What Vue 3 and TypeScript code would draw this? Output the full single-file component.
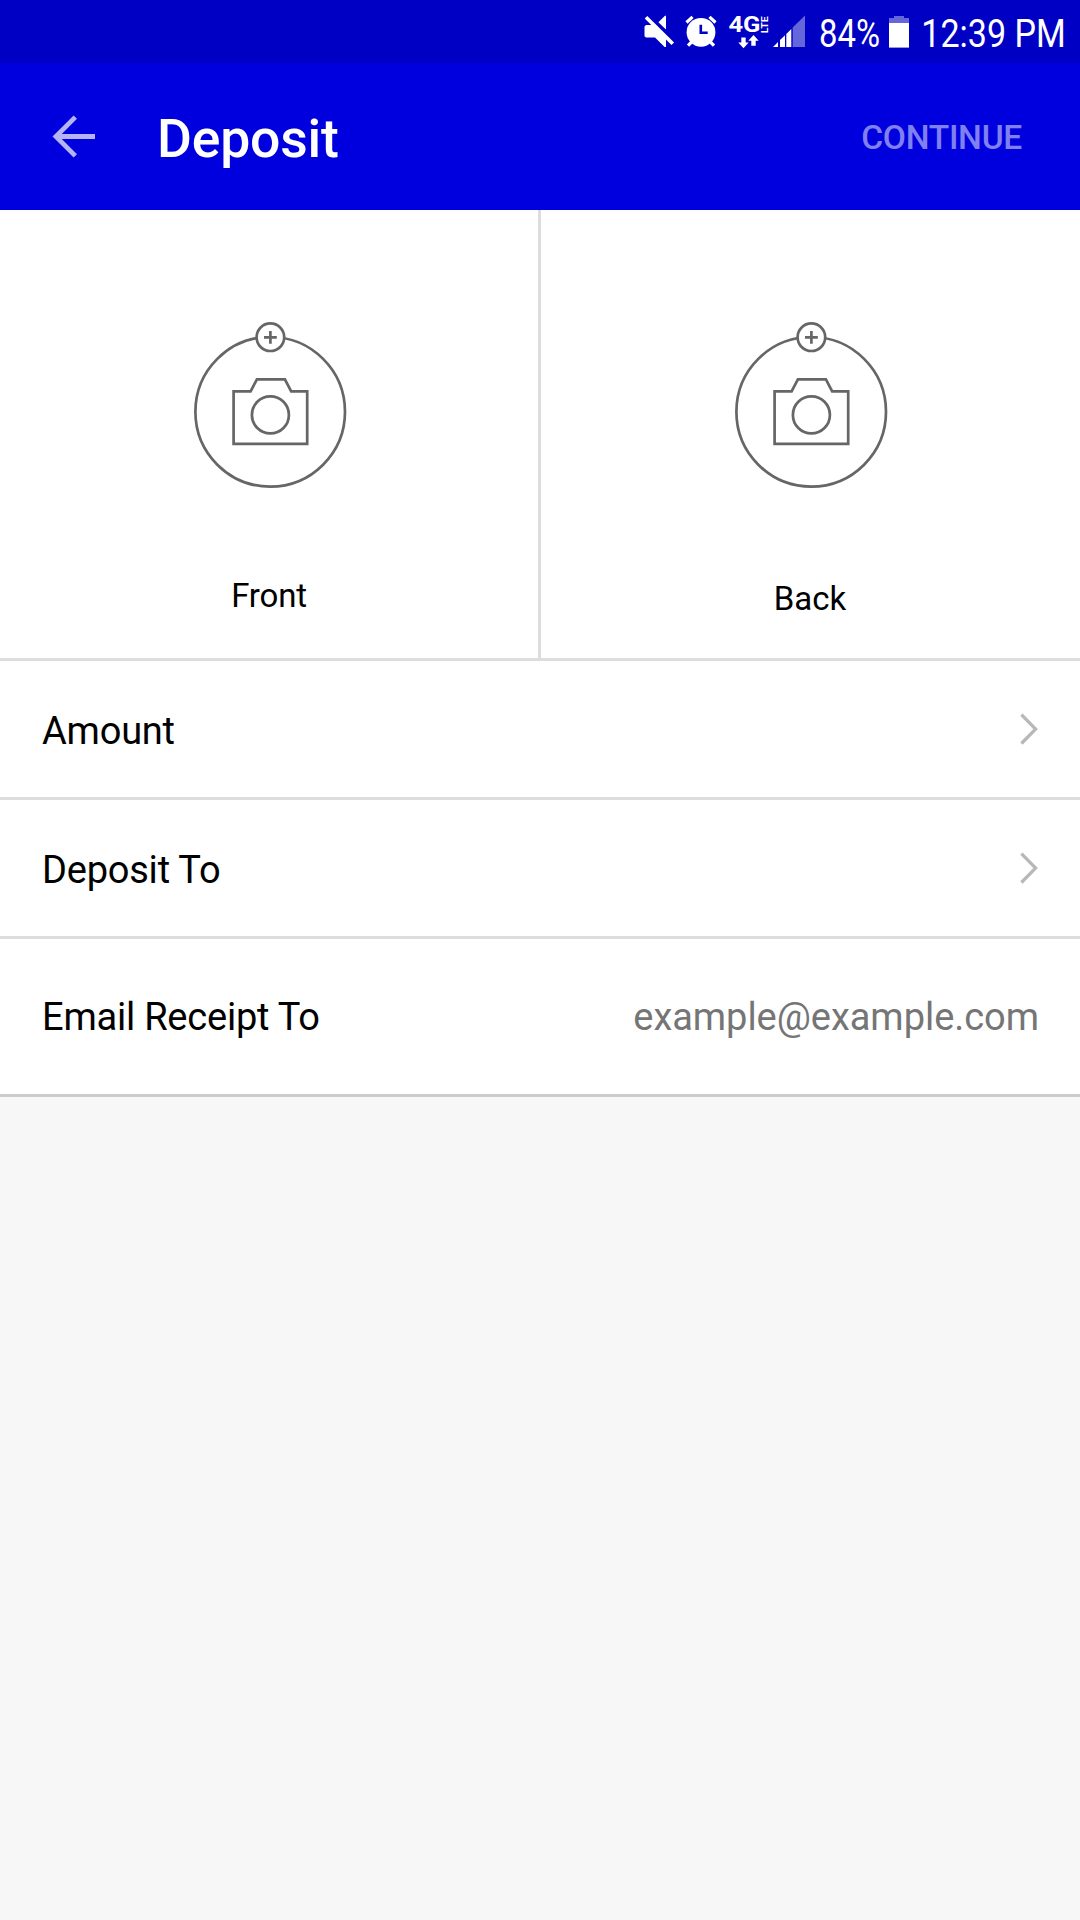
<script setup lang="ts">
const sides: { name: string; label: string }[] = [
  { name: 'front', label: 'Front' },
  { name: 'back', label: 'Back' },
]
const links: string[] = ['Amount', 'Deposit To']
</script>

<template>
  <div class="screen">
    <header class="status">
      <svg width="42" height="63" viewBox="640 0 42 63" fill="#fff">
        <path d="M658.4 22.2L665 15.8h1v13.6zM646 25h5l3-2 12 13V47h-1.4l-9.6-9.4h-9l-1.5-1.4v-9.7z" />
        <path d="M646 17.2L672.8 43.8" stroke="#fff" stroke-width="3.7" />
      </svg>
      <svg width="42" height="63" viewBox="682 0 42 63">
        <circle cx="701" cy="32.3" r="14.4" fill="#fff" />
        <path d="M686.5 22.5l6-5.6M715.5 22.5l-6-5.6M691.6 42l-3.6 3.6M710.4 42l3.6 3.6" stroke="#fff" stroke-width="3.2" />
        <path d="M700.8 24.8v8h6.9" fill="none" stroke="#0000c4" stroke-width="2.6" />
      </svg>
      <svg width="46" height="63" viewBox="724 0 46 63" fill="#fff">
        <text class="net" x="728.5" y="32.2" textLength="32" lengthAdjust="spacingAndGlyphs">4G</text>
        <text class="lte" transform="translate(767.5 33.2) rotate(-90)" textLength="17" lengthAdjust="spacingAndGlyphs">LTE</text>
        <path d="M741.3 37.5h4.4v5h3l-5.2 5.7-5.2-5.7h3zM751.3 45.7h4.4v-5h3l-5.2-5.7-5.2 5.7h3z" />
      </svg>
      <svg width="46" height="63" viewBox="770 0 46 63" fill="#fff">
        <path d="M773 47l5-4.9V47zM780 40.1l5-4.9V47h-5zM786.3 33.9l5-4.9V47h-5z" />
        <path d="M792.7 27.6L805 15.5V47h-12.3z" opacity=".4" />
      </svg>
      <svg width="66" height="63" viewBox="816 0 66 63" fill="#fff">
        <text class="clock" x="819" y="47" textLength="61" lengthAdjust="spacingAndGlyphs">84%</text>
      </svg>
      <svg width="34" height="63" viewBox="882 0 34 63" fill="#fff">
        <path d="M889 18h5v-2h10v2h5v5h-20z" opacity=".4" />
        <path d="M889 23h20v24.6h-20z" />
      </svg>
      <svg width="164" height="63" viewBox="916 0 164 63" fill="#fff">
        <text class="clock" x="921.3" y="47" textLength="144.5" lengthAdjust="spacingAndGlyphs">12:39 PM</text>
      </svg>
    </header>
    <nav class="bar">
      <svg class="arrow" width="44" height="44" viewBox="52 114 44 44" fill="none" stroke="#b3b3f5" stroke-width="4.8">
        <path d="M95 136.5H56M75.3 117.1L55.9 136.5l19.4 19.4" />
      </svg>
      <h1>Deposit</h1>
      <button type="button">CONTINUE</button>
    </nav>
    <section class="photos">
      <div v-for="side in sides" :key="side.name" class="photo" :class="side.name">
        <svg width="156" height="168" viewBox="192 321 156 168" fill="none" stroke="#666" stroke-width="2.7">
          <circle cx="270.2" cy="411.8" r="74.8" />
          <circle cx="270.4" cy="337.2" r="13.8" fill="#fff" />
          <path d="M264 337.3h12.8M270.4 331v12.8" />
          <path d="M233.6 391.4h17l6.3-12h28l6.3 12h16v52.4h-73.6z" />
          <circle cx="270.4" cy="414.9" r="18.5" />
        </svg>
        <span>{{ side.label }}</span>
      </div>
    </section>
    <main>
      <div v-for="link in links" :key="link" class="row">
        <span>{{ link }}</span>
        <svg width="20" height="34" viewBox="1019 712 20 34" fill="none" stroke="#b8b8b8" stroke-width="3.3">
          <path d="M1021.4 714.7l14.2 14.4-14.2 14.4" />
        </svg>
      </div>
      <div class="row email">
        <span>Email Receipt To</span>
        <span class="address">example@example.com</span>
      </div>
    </main>
  </div>
</template>

<style>
body { background: #f7f7f7; }
</style>

<style scoped>
.screen { width: 1080px; min-height: 1920px; background: #f7f7f7; font-family: Roboto, sans-serif; color: #000; }
svg { display: block; flex: none; overflow: visible; }
.status { height: 63px; background: #0000c4; display: flex; justify-content: flex-end; }
.clock { font-size: 39.4px; }
.net { font-size: 21.5px; font-weight: 700; }
.lte { font-size: 9.4px; font-weight: 700; }
.bar { height: 147px; box-sizing: border-box; background: #0000df; display: flex; align-items: center; padding: 0 58px 0 52px; }
.arrow { margin-top: -1px; }
h1 { margin: 5px 0 0 61px; font-size: 53.5px; line-height: 64px; font-weight: 500; letter-spacing: -0.2px; color: #fff; }
button { margin: 2px 0 0 auto; padding: 0; border: 0; background: none; font: 500 33.6px/40px Roboto, sans-serif; letter-spacing: -0.3px; color: #8080ef; }
.photos { height: 451px; box-sizing: border-box; display: flex; border-bottom: 3px solid #ddd; background: #fff; }
.photo { width: 541px; box-sizing: border-box; padding-top: 111px; display: flex; flex-direction: column; align-items: center; }
.front { border-right: 3px solid #ddd; padding-left: 2px; }
.photo span { margin-top: 87px; font-size: 33px; line-height: 40px; }
.front span { margin-left: -2px; letter-spacing: -0.2px; }
.back { width: 539px; padding-left: 1px; }
.back span { margin-top: 90px; margin-left: -2px; }
.row { height: 139px; box-sizing: border-box; padding: 0 41px 0 42px; border-bottom: 3px solid #ddd; background: #fff; display: flex; align-items: center; justify-content: space-between; font-size: 38px; line-height: 46px; letter-spacing: -0.22px; }
.row span { margin-top: 4px; }
.email { height: 158px; border-bottom-color: #ccc; }
.email span { margin-top: 1px; }
.email .address { color: #757575; letter-spacing: -0.04px; }
</style>
